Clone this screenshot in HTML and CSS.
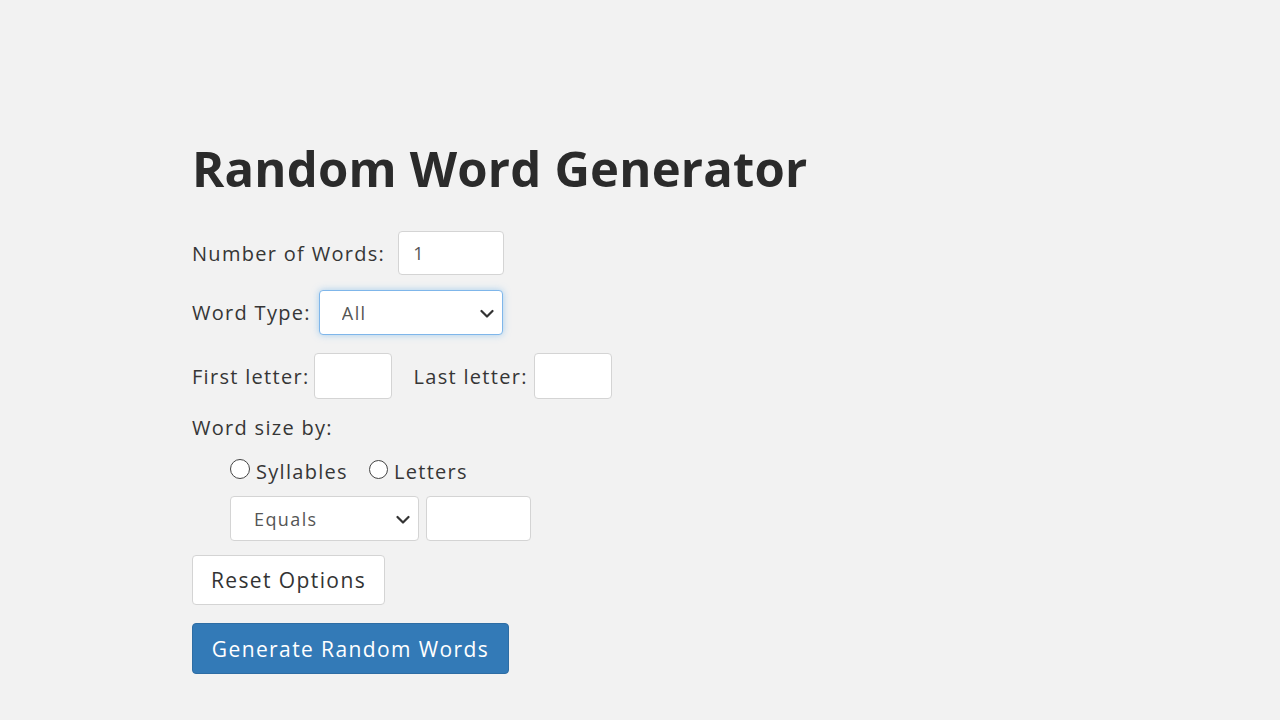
FILE: index.html
```html
<!DOCTYPE html>
<html lang="en">
<head>
<meta charset="utf-8">
<title>Random Word Generator</title>
<link rel="stylesheet" href="styles.css">
</head>
<body>
<main class="page">
  <h1 class="title">Random Word Generator</h1>
  <form class="form">
    <div class="row row-num">
      <label class="label" for="num">Number of Words:</label>
      <input class="field field-num" id="num" type="text" value="1">
    </div>
    <div class="row row-type">
      <label class="label" for="type">Word Type:</label>
      <div class="select-wrap select-type focused">
        <select class="select" id="type"><option>All</option></select>
        <svg class="chev" viewBox="0 0 14 10" width="14" height="10"><path d="M1.5 2 L7 7.5 L12.5 2" fill="none" stroke="#333" stroke-width="2.2" stroke-linecap="round" stroke-linejoin="round"/></svg>
      </div>
    </div>
    <div class="row row-letters">
      <label class="label" for="first">First letter:</label>
      <input class="field field-letter field-first" id="first" type="text">
      <label class="label label-last" for="last">Last letter:</label>
      <input class="field field-letter field-last" id="last" type="text">
    </div>
    <div class="size-label">Word size by:</div>
    <div class="row row-radios">
      <span class="radio"></span><span class="radio-text">Syllables</span>
      <span class="radio radio-2"></span><span class="radio-text">Letters</span>
    </div>
    <div class="row row-equals">
      <div class="select-wrap select-eq">
        <select class="select"><option>Equals</option></select>
        <svg class="chev" viewBox="0 0 14 10" width="14" height="10"><path d="M1.5 2 L7 7.5 L12.5 2" fill="none" stroke="#333" stroke-width="2.2" stroke-linecap="round" stroke-linejoin="round"/></svg>
      </div>
      <input class="field field-size" type="text">
    </div>
    <button type="button" class="btn btn-reset">Reset Options</button>
    <button type="button" class="btn btn-gen">Generate Random Words</button>
  </form>
</main>
</body>
</html>
```
FILE: styles.css
```css
* { box-sizing: border-box; }
html, body { margin: 0; padding: 0; }
body {
  background: #f2f2f2;
  color: #333;
  font-family: "Open Sans", "DejaVu Sans", sans-serif;
  width: 1280px;
  height: 720px;
  overflow: hidden;
}
.page {
  padding: 138px 0 0 192px;
}
.title {
  margin: 0;
  font-size: 49px;
  line-height: 60px;
  font-weight: 700;
  color: #2b2b2b;
  letter-spacing: 0.2px;
}
.form {
  display: flex;
  flex-direction: column;
  align-items: flex-start;
  margin-top: 33px;
}
.row {
  display: flex;
  align-items: center;
}
.label, .size-label, .radio-text {
  font-size: 20px;
  color: #363636;
  letter-spacing: 1.3px;
}
.field {
  background: #fff;
  border: 1px solid #d4d4d4;
  border-radius: 4px;
  font-family: inherit;
  font-size: 18px;
  color: #555;
  padding: 0 14px;
  outline: none;
}
.field-num { width: 106px; height: 44px; margin-left: 13px; }
.row-type { margin-top: 15px; }
.select-wrap {
  position: relative;
  background: #fff;
  border: 1px solid #d4d4d4;
  border-radius: 4px;
}
.select {
  appearance: none;
  -webkit-appearance: none;
  border: 0;
  background: transparent;
  font-family: inherit;
  font-size: 18px;
  color: #555;
  width: 100%;
  height: 100%;
  outline: none;
  letter-spacing: 1.4px;
}
.chev {
  position: absolute;
  right: 8px;
  top: 50%;
  margin-top: -4px;
}
.select-type {
  width: 184px;
  height: 45px;
  margin-left: 8px;
  border-color: #7fb6ea;
  box-shadow: 0 0 7px rgba(102, 175, 233, 0.55);
}
.select-type .select { padding-left: 22px; }
.row-letters { margin-top: 18px; }
.field-letter { width: 78px; height: 46px; }
.field-first { margin-left: 4px; }
.field-last { margin-left: 6px; }
.label-last { margin-left: 22px; }
.size-label {
  margin-top: 17px;
  line-height: 24px;
}
.row-radios {
  margin-top: 19px;
  margin-left: 38px;
  height: 24px;
}
.radio {
  width: 20px;
  height: 20px;
  border: 1.5px solid #444;
  border-radius: 50%;
  background: #fff;
  margin-right: 6px;
  margin-top: -4px;
}
.radio-2 { margin-left: 21px; width: 19px; height: 19px; }
.row-equals { margin-top: 13px; margin-left: 38px; }
.select-eq { width: 189px; height: 45px; }
.select-eq .select { padding-left: 23px; }
.field-size { width: 105px; height: 45px; margin-left: 7px; }
.btn {
  font-family: inherit;
  font-size: 21px;
  letter-spacing: 1.4px;
  border-radius: 4px;
  cursor: pointer;
  padding: 0;
}
.btn-reset {
  margin-top: 14px;
  width: 193px;
  height: 50px;
  background: #fff;
  border: 1px solid #d4d4d4;
  color: #333;
}
.btn-gen {
  margin-top: 18px;
  width: 317px;
  height: 51px;
  background: #337ab7;
  border: 1px solid #2e6da4;
  color: #fff;
}
```
